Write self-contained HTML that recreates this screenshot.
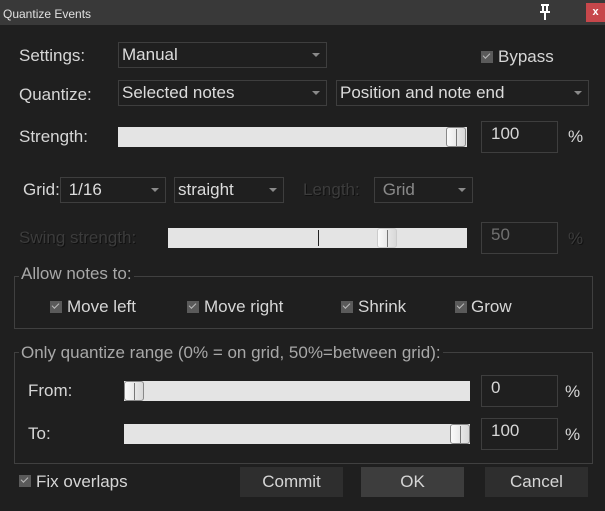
<!DOCTYPE html><html><head><style>
body{margin:0;width:605px;height:511px;background:#1f1f1f;font-family:"Liberation Sans",Arial,sans-serif;color:#d6d6d6;position:relative;overflow:hidden}
div,span{position:absolute;box-sizing:border-box}
.t{font-size:17px;line-height:20px;white-space:nowrap}
.dd{border:1px solid #3e3e3e;background:#1f1f1f;font-size:17px;line-height:24px;padding-left:3px;color:#dcdcdc}
.dd:after{content:"";position:absolute;right:6px;top:10px;border-left:4px solid transparent;border-right:4px solid transparent;border-top:4px solid #8a8a8a}
.sl{background:#e4e4e4}
.th{width:20px;height:20px;top:0;border:1px solid #888;border-radius:3px;background:linear-gradient(90deg,#fafafa,#d8d8d8)}
.th:after{content:"";position:absolute;left:9px;top:1px;width:1px;height:17px;background:#777}
.box{border:1px solid #3e3e3e;font-size:17px;padding:2px 0 0 9px;line-height:20px}
.cb{width:12px;height:12px;background:#5a5a5a}
.cb:after{content:"";position:absolute;left:2px;top:2px;width:6px;height:3px;border-left:1.5px solid #bbb;border-bottom:1.5px solid #bbb;transform:rotate(-45deg)}
.grp{border:1px solid #404040}
.lg{background:#1f1f1f;color:#a8a8a8;font-size:17px;padding:0 2px;line-height:20px}
.dim{color:#3c3c3c;text-shadow:1px 1px 0 #111}
.btn{font-size:17px;text-align:center;line-height:30px;background:#2e2e2e;color:#d6d6d6}
</style></head><body>
<div style="left:0;top:0;width:605px;height:25px;background:#393939"></div>
<span class="t" style="left:3px;top:4px;font-size:12px;color:#e0e0e0">Quantize Events</span>
<svg style="position:absolute;left:538px;top:4px" width="14" height="16"><path d="M3 1h8M5 1v7M9 1v7M2 8h10M7 8v8" stroke="#fff" stroke-width="2" fill="none"/></svg>
<div style="left:586px;top:3px;width:19px;height:19px;background:#c7474b;color:#fff;font-size:11px;text-align:center;line-height:18px;font-weight:bold">x</div>

<span class="t" style="left:19px;top:46px">Settings:</span>
<div class="dd" style="left:118px;top:42px;width:209px;height:26px">Manual</div>
<div class="cb" style="left:481px;top:51px"></div>
<span class="t" style="left:498px;top:47px">Bypass</span>

<span class="t" style="left:19px;top:85px">Quantize:</span>
<div class="dd" style="left:118px;top:80px;width:209px;height:26px">Selected notes</div>
<div class="dd" style="left:336px;top:80px;width:253px;height:26px">Position and note end</div>

<span class="t" style="left:19px;top:127px">Strength:</span>
<div class="sl" style="left:118px;top:127px;width:349px;height:20px"><div class="th" style="left:328px"></div></div>
<div class="box" style="left:481px;top:121px;width:77px;height:32px">100</div>
<span class="t" style="left:568px;top:127px">%</span>

<span class="t" style="left:23px;top:180px">Grid:</span>
<div class="dd" style="left:60px;top:177px;width:106px;height:26px">&nbsp;1/16</div>
<div class="dd" style="left:174px;top:177px;width:110px;height:26px">straight</div>
<span class="t dim" style="left:303px;top:180px">Length:</span>
<div class="dd" style="left:374px;top:177px;width:99px;height:26px;color:#8a8a8a">&nbsp;Grid</div>

<span class="t dim" style="left:19px;top:228px">Swing strength:</span>
<div class="sl" style="left:168px;top:228px;width:299px;height:20px"><div style="left:150px;top:2px;width:1px;height:16px;background:#222"></div><div class="th" style="left:209px;border-color:#ccc"></div></div>
<div class="box" style="left:481px;top:222px;width:77px;height:32px;color:#707070">50</div>
<span class="t dim" style="left:568px;top:229px">%</span>

<div class="grp" style="left:14px;top:276px;width:579px;height:53px"></div>
<span class="lg" style="left:19px;top:264px">Allow notes to:</span>
<div class="cb" style="left:50px;top:301px"></div><span class="t" style="left:67px;top:297px">Move left</span>
<div class="cb" style="left:187px;top:301px"></div><span class="t" style="left:204px;top:297px">Move right</span>
<div class="cb" style="left:341px;top:301px"></div><span class="t" style="left:358px;top:297px">Shrink</span>
<div class="cb" style="left:455px;top:301px"></div><span class="t" style="left:471px;top:297px">Grow</span>

<div class="grp" style="left:14px;top:352px;width:579px;height:112px"></div>
<span class="lg" style="left:19px;top:343px">Only quantize range (0% = on grid, 50%=between grid):</span>
<span class="t" style="left:28px;top:381px">From:</span>
<div class="sl" style="left:124px;top:381px;width:346px;height:20px"><div class="th" style="left:0"></div></div>
<div class="box" style="left:481px;top:375px;width:77px;height:32px">0</div>
<span class="t" style="left:565px;top:382px">%</span>
<span class="t" style="left:28px;top:424px">To:</span>
<div class="sl" style="left:124px;top:424px;width:346px;height:20px"><div class="th" style="left:326px"></div></div>
<div class="box" style="left:481px;top:418px;width:77px;height:32px">100</div>
<span class="t" style="left:565px;top:425px">%</span>

<div class="cb" style="left:19px;top:475px"></div><span class="t" style="left:36px;top:472px">Fix overlaps</span>
<div class="btn" style="left:240px;top:467px;width:103px;height:30px">Commit</div>
<div class="btn" style="left:361px;top:467px;width:103px;height:30px;background:#3d3d3d">OK</div>
<div class="btn" style="left:485px;top:467px;width:103px;height:30px">Cancel</div>
</body></html>
